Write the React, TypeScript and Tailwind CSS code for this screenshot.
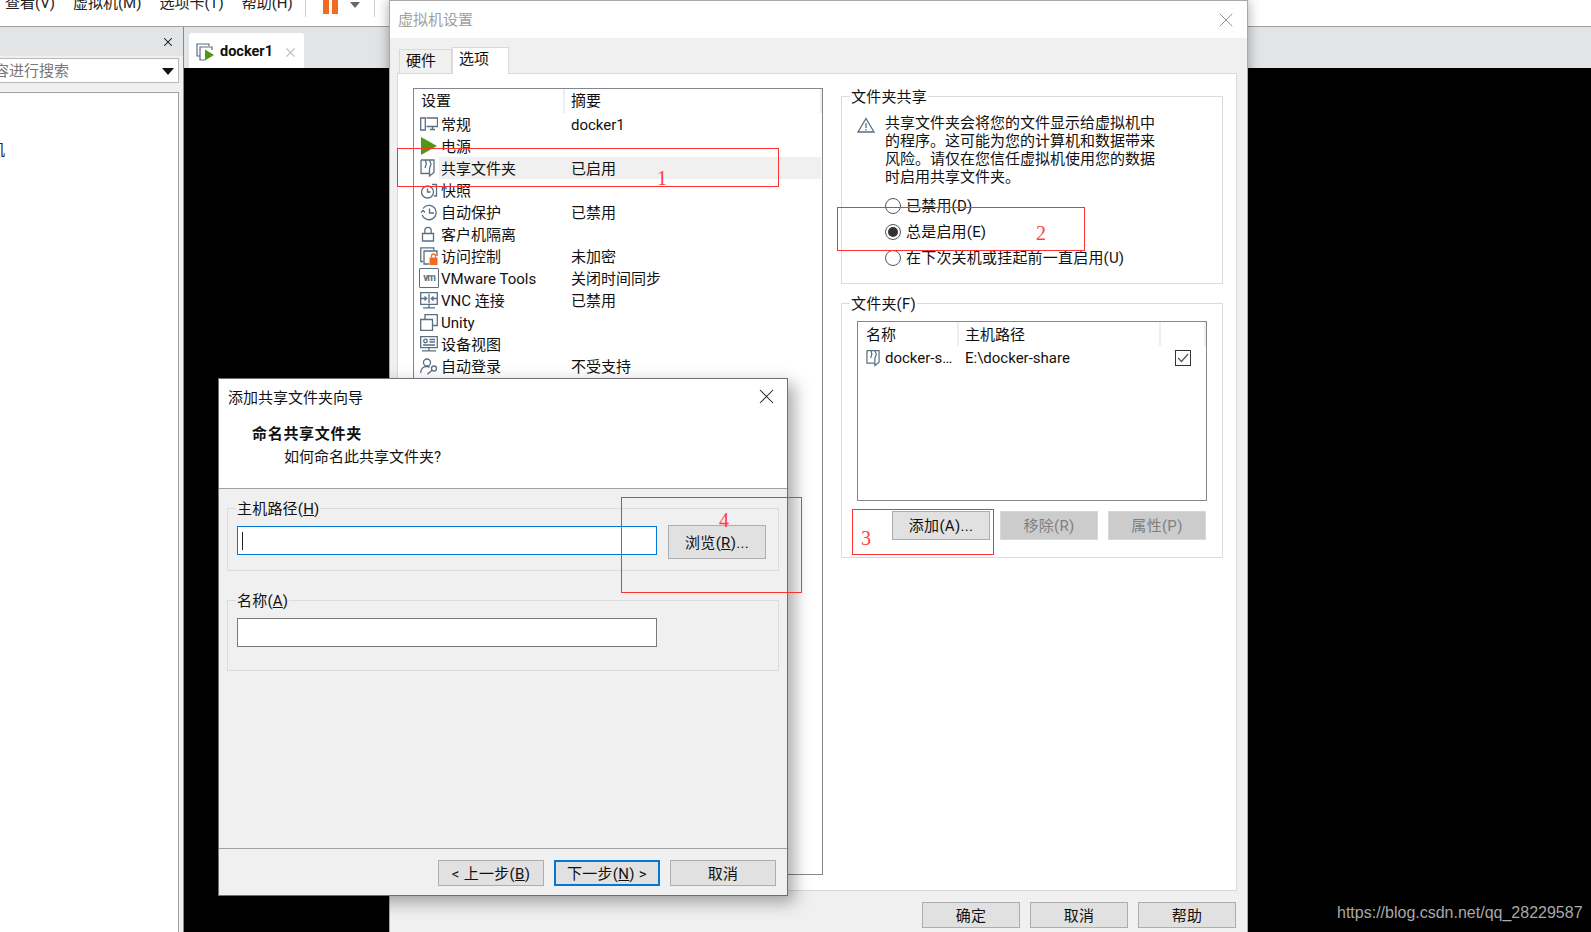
import type { ReactNode } from "react";
import { X } from "lucide-react";

const font = "font-['Roboto','Noto_Sans_CJK_SC',sans-serif]";

function Btn({ children, w, h, off, focus }: { children: ReactNode; w: string; h: string; off?: boolean; focus?: boolean }) {
  const look = off
    ? "bg-[#cccccc] border-[#d8d8d8] text-[#808080]"
    : focus
      ? "bg-[#e1e1e1] border-2 border-[#0078d7] text-[#111]"
      : "bg-[#e1e1e1] border-[#adadad] text-[#111]";
  return (
    <div className={`flex shrink-0 items-center justify-center border pt-[2px] text-[15px] leading-none tracking-[0.3px] ${w} ${h} ${look}`}>
      {children}
    </div>
  );
}

function Group({ legend, className, children }: { legend: ReactNode; className: string; children: ReactNode }) {
  return (
    <fieldset className={`border border-[#dcdcdc] ${className}`}>
      <legend className="ml-[8px] h-5 px-px pt-px text-[15px] leading-5 tracking-[0.2px] text-[#111]">{legend}</legend>
      {children}
    </fieldset>
  );
}

function Radio({ on, children }: { on?: boolean; children: ReactNode }) {
  return (
    <div className="flex h-[26px] items-center gap-[5px] pl-[43px] text-[15px] tracking-[0.2px] text-[#111]">
      <span className="flex h-4 w-4 items-center justify-center rounded-full border border-[#555] bg-white">
        {on && <span className="h-[10px] w-[10px] rounded-full bg-[#333]" />}
      </span>
      {children}
    </div>
  );
}

const S = { fill: "none", stroke: "#5b6f82", strokeWidth: 1.3 };

function ShareIcon({ w = 15 }: { w?: number }) {
  return (
    <svg width={w} height="18" viewBox="0 0 15 18" {...S} className="shrink-0">
      <path d="M1 1h13v12.500l-4.500 3.500V9.500L11 5 9.500 1M1 1v13.500h8.500M5.500 1l.8 4-1.300 4" />
    </svg>
  );
}

const rows: { name: string; sum?: string; icon: ReactNode; sel?: boolean }[] = [
  {
    name: "常规",
    sum: "docker1",
    icon: (
      <svg width="18" height="14" viewBox="0 0 18 14" {...S}>
        <path d="M.7 1h4.600v12H.7zM6.500 1h11v8.500h-11M10 12.500h5M12.500 9.500v3" />
      </svg>
    ),
  },
  {
    name: "电源",
    icon: (
      <svg width="17" height="18" viewBox="0 0 17 18">
        <path d="M1 0l16 9L1 18z" fill="#4e9a0e" />
      </svg>
    ),
  },
  { name: "共享文件夹", sum: "已启用", sel: true, icon: <ShareIcon /> },
  {
    name: "快照",
    icon: (
      <svg width="18" height="17" viewBox="0 0 18 17" {...S}>
        <circle cx="7.500" cy="10" r="6" />
        <path d="M7.500 6.500V10h3M12 2.500h4.500V14h-2.500" />
      </svg>
    ),
  },
  {
    name: "自动保护",
    sum: "已禁用",
    icon: (
      <svg width="18" height="17" viewBox="0 0 18 17" {...S}>
        <path d="M3 4.500A7.200 7.200 0 1 1 2.200 11M1 8.500l2 -2 2 2M9.500 4.500v4.500H14" />
      </svg>
    ),
  },
  {
    name: "客户机隔离",
    icon: (
      <svg width="16" height="16" viewBox="0 0 16 16" {...S}>
        <path d="M2.500 7.500h11v7.500h-11zM4.800 7.500V4.500a3.200 3.200 0 0 1 6.400 0v3" />
      </svg>
    ),
  },
  {
    name: "访问控制",
    sum: "未加密",
    icon: (
      <svg width="18" height="18" viewBox="0 0 18 18" {...S}>
        <path d="M3 14.500H.8V.8h13v2.200M9 17H4V4h13v5" />
        <path d="M9.500 10.500h8V18h-8z" fill="#f26b21" stroke="none" />
        <path d="M11.500 10.500V9a2 2 0 0 1 4 0v1.500" stroke="#f26b21" />
      </svg>
    ),
  },
  {
    name: "VMware Tools",
    sum: "关闭时间同步",
    icon: (
      <span className="-ml-px flex h-[20px] w-[20px] items-center justify-center rounded-[1px] border border-[#5b6f82] text-[10px] leading-none font-bold tracking-[-1px] text-[#5b6f82]">
        vm
      </span>
    ),
  },
  {
    name: "VNC 连接",
    sum: "已禁用",
    icon: (
      <svg width="18" height="17" viewBox="0 0 18 17" {...S}>
        <path d="M.7.700h16.600v11.600H.7zM3 15.800h12M9 12.300v3.500M.7 6.500h6M11.300 6.500h6M4.500 4.500l2.200 2-2.200 2M13.500 4.500l-2.200 2 2.200 2M9 2v9" />
      </svg>
    ),
  },
  {
    name: "Unity",
    icon: (
      <svg width="18" height="17" viewBox="0 0 18 17" {...S}>
        <path d="M.7 5.500h11.800v10.800H.7zM5 5.500V.7h12.300V11.500h-4.800" />
      </svg>
    ),
  },
  {
    name: "设备视图",
    icon: (
      <svg width="18" height="16" viewBox="0 0 18 16" {...S}>
        <path d="M.7.700h16.600v11H.7zM2 14.800h14M9 11.700v3" />
        <circle cx="5.500" cy="5" r="1.800" />
        <path d="M9.500 3.500h5.500M9.500 6h5.500M3 9h12" />
      </svg>
    ),
  },
  {
    name: "自动登录",
    sum: "不受支持",
    icon: (
      <svg width="18" height="17" viewBox="0 0 18 17" {...S}>
        <circle cx="7" cy="4.500" r="3.500" />
        <path d="M.7 15c0-4 2.500-6.500 6-6.500 1.300 0 2.300.3 3 .8" />
        <circle cx="14" cy="10.500" r="2.500" />
        <path d="M12 12.200L7.500 16.300" />
      </svg>
    ),
  },
];

function SettingsDialog() {
  return (
    <div className="absolute top-0 left-[389px] flex h-[932px] w-[859px] flex-col border-x border-t border-[#a8a8a8] border-b-0 bg-[#f0f0f0] shadow-[0_0_12px_rgba(0,0,0,0.35)]">
      <div className="flex h-[37px] shrink-0 items-center justify-between bg-white pr-[9px] pl-[8px] text-[15px] text-[#a0a0a0]">
        <span className="pt-[2px]">虚拟机设置</span>
        <X size={24} strokeWidth={0.9} className="text-[#888]" />
      </div>
      <div className="flex h-[35px] shrink-0 items-end pl-[9px] text-[15px] text-[#111]">
        <div className="flex h-[24px] w-[53px] items-center border border-b-0 border-[#d9d9d9] bg-[#f0f0f0] pl-[6px]">硬件</div>
        <div className="relative z-10 -mb-px flex h-[27px] w-[57px] items-start border border-b-0 border-[#d9d9d9] bg-white pl-[6px]">选项</div>
      </div>
      <div className="mr-[10px] ml-[7px] flex min-h-0 flex-1 items-start gap-[18px] border border-[#d9d9d9] bg-white pt-[12px] pl-[15px]">
        <div className="mt-[2px] h-[787px] w-[410px] shrink-0 border border-[#828790] text-[15px] text-[#111]">
          <div className="flex h-[24px] items-center">
            <div className="flex h-full w-[151px] items-center border-r-2 border-[#eeeeee] pl-[7px]">设置</div>
            <div className="flex h-full flex-1 items-center border-r-2 border-[#eeeeee] pl-[6px]">摘要</div>
          </div>
          {rows.map((r) => (
            <div key={r.name} className="flex h-[22px] items-center">
              <div className="flex w-[25px] shrink-0 items-center justify-start pl-[6px]">{r.icon}</div>
              <div className={`mr-px flex h-full flex-1 items-center pt-[2px] pl-[2px] ${r.sel ? "bg-[#f0f0f0]" : ""}`}>
                <div className="w-[130px] shrink-0 whitespace-nowrap">{r.name}</div>
                <div className="whitespace-nowrap">{r.sum}</div>
              </div>
            </div>
          ))}
        </div>
        <div className="flex w-[382px] shrink-0 flex-col gap-[9px]">
          <Group legend="文件夹共享" className="h-[198px]">
            <div className="flex gap-[10px] pt-[8px] pl-[15px]">
              <svg width="18" height="16" viewBox="0 0 18 16" className="mt-[3px] shrink-0">
                <path d="M9 1.500L17 15H1z" fill="none" stroke="#5b6f82" strokeWidth="1.300" />
                <path d="M9 6v5M9 12v1.500" stroke="#5b6f82" strokeWidth="1.300" />
              </svg>
              <p className="w-[272px] text-[15px] leading-[18px] text-[#111]">
                共享文件夹会将您的文件显示给虚拟机中的程序。这可能为您的计算机和数据带来风险。请仅在您信任虚拟机使用您的数据时启用共享文件夹。
              </p>
            </div>
            <div className="mt-[7px]">
              <Radio>已禁用(D)</Radio>
              <Radio on>总是启用(E)</Radio>
              <Radio>在下次关机或挂起前一直启用(U)</Radio>
            </div>
          </Group>
          <Group legend="文件夹(F)" className="h-[265px]">
            <div className="mt-[8px] ml-[15px] h-[180px] w-[350px] border border-[#828790] text-[15px] text-[#111]">
              <div className="flex h-[24px] items-center">
                <div className="flex h-full w-[101px] items-center border-r-2 border-[#eeeeee] pt-[2px] pl-[8px]">名称</div>
                <div className="flex h-full w-[202px] items-center border-r-2 border-[#eeeeee] pt-[2px] pl-[6px]">主机路径</div>
                <div className="h-full flex-1 border-r-2 border-[#eeeeee]" />
              </div>
              <div className="flex h-[24px] items-center">
                <div className="flex w-[101px] items-center gap-[5px] pl-[8px]">
                  <ShareIcon w={14} />
                  <span className="whitespace-nowrap pt-px">docker-s…</span>
                </div>
                <div className="w-[216px] pt-px pl-[6px]">E:\docker-share</div>
                <div className="flex h-4 w-4 items-center justify-center border border-[#333]">
                  <svg width="12" height="10" viewBox="0 0 12 10">
                    <path d="M1 5l3.500 3.500L11 1" fill="none" stroke="#555" strokeWidth="1.200" />
                  </svg>
                </div>
              </div>
            </div>
            <div className="mt-[10px] ml-[50px] flex gap-[10px]">
              <Btn w="w-[98px]" h="h-[29px]">添加(A)...</Btn>
              <Btn w="w-[98px]" h="h-[29px]" off>移除(R)</Btn>
              <Btn w="w-[98px]" h="h-[29px]" off>属性(P)</Btn>
            </div>
          </Group>
        </div>
      </div>
      <div className="flex h-[41px] shrink-0 items-start justify-end gap-[10px] pt-[11px] pr-[11px]">
        <Btn w="w-[98px]" h="h-[26px]">确定</Btn>
        <Btn w="w-[98px]" h="h-[26px]">取消</Btn>
        <Btn w="w-[98px]" h="h-[26px]">帮助</Btn>
      </div>
    </div>
  );
}

function WizardDialog() {
  return (
    <div className="absolute top-[378px] left-[218px] flex h-[518px] w-[570px] flex-col border border-[#707070] bg-[#f0f0f0] shadow-[6px_6px_16px_rgba(0,0,0,0.35)]">
      <div className="relative h-[110px] shrink-0 border-b border-[#a0a0a0] bg-white text-[15px] text-[#111]">
        <div className="flex h-[35px] items-center justify-between pr-[8px] pl-[9px]">
          <span className="pt-[4px]">添加共享文件夹向导</span>
          <X size={25} strokeWidth={1} className="text-[#222]" />
        </div>
        <div className="mt-[9px] pl-[33px] leading-[23px] font-bold tracking-[0.7px]">命名共享文件夹</div>
        <div className="pl-[65px] leading-[23px]">如何命名此共享文件夹?</div>
      </div>
      <div className="flex flex-1 flex-col gap-[19px] px-[8px] pt-[9px]">
        <Group legend={<>主机路径(<u>H</u>)</>} className="h-[73px]">
          <div className="flex items-start pl-[9px]">
            <div className="mt-[8px] flex h-[29px] w-[420px] items-center border border-[#0078d7] bg-white pl-[4px]">
              <span className="h-[18px] w-px bg-[#222]" />
            </div>
            <div className="mt-[7px] ml-[11px]">
              <Btn w="w-[98px]" h="h-[34px]">浏览(<u>R</u>)...</Btn>
            </div>
          </div>
        </Group>
        <Group legend={<>名称(<u>A</u>)</>} className="h-[81px]">
          <div className="mt-[8px] ml-[9px] h-[29px] w-[420px] border border-[#7a7a7a] bg-white" />
        </Group>
      </div>
      <div className="flex h-[47px] shrink-0 items-start justify-end gap-[10px] border-t border-[#a0a0a0] pt-[11px] pr-[11px]">
        <Btn w="w-[106px]" h="h-[26px]">{"< 上一步("}<u>B</u>)</Btn>
        <Btn w="w-[106px]" h="h-[26px]" focus>{"下一步("}<u>N</u>{") >"}</Btn>
        <Btn w="w-[106px]" h="h-[26px]">取消</Btn>
      </div>
    </div>
  );
}

export default function App() {
  return (
    <div className={`relative flex h-[932px] w-[1591px] flex-col overflow-hidden bg-black ${font}`}>
      <div className="flex h-[27px] shrink-0 items-start gap-[18px] border-b border-[#a0a0a0] bg-white pl-[5px] text-[15px] leading-[20px] text-[#222]">
        <span className="-mt-[7px]">查看(V)</span>
        <span className="-mt-[7px]">虚拟机(M)</span>
        <span className="-mt-[7px]">选项卡(T)</span>
        <span className="-mt-[7px]">帮助(H)</span>
        <div className="-ml-[6px] flex h-[17px] items-start border-x border-[#d0d0d0] pr-[14px] pl-[17px]">
          <span className="h-[14px] w-[6px] bg-[#f26b21]" />
          <span className="ml-[3px] h-[14px] w-[6px] bg-[#f26b21]" />
          <span className="mt-[2px] ml-[12px] h-0 w-0 border-x-[5px] border-t-[6px] border-x-transparent border-t-[#666]" />
        </div>
      </div>
      <div className="flex min-h-0 flex-1">
        <div className="flex w-[184px] shrink-0 flex-col border-r border-[#8a8a8a] bg-[#f0f0f0]">
          <div className="flex h-[29px] shrink-0 items-center justify-end bg-[#e3e4e6] pr-[8px]">
            <X size={14} strokeWidth={1.8} className="text-[#111]" />
          </div>
          <div className="mt-[2px] flex h-[25px] w-[179px] shrink-0 items-center justify-between overflow-hidden border border-l-0 border-[#b8b8b8] bg-white pt-px pr-[4px] text-[15px] text-[#777]">
            <span className="-ml-[6px] whitespace-nowrap">容进行搜索</span>
            <span className="h-0 w-0 border-x-[6px] border-t-[7px] border-x-transparent border-t-[#111]" />
          </div>
          <div className="mt-[9px] w-[179px] flex-1 overflow-hidden border-t border-r border-[#a0a0a0] bg-white">
            <div className="mt-[46px] -ml-[10px] text-[15px] text-[#222]">机</div>
          </div>
        </div>
        <div className="flex min-w-0 flex-1 flex-col">
          <div className="flex h-[41px] shrink-0 items-end bg-[#e3e4e6] pl-[5px]">
            <div className="flex h-[35px] w-[115px] items-center gap-[5px] rounded-t-[3px] bg-white pt-[3px] pl-[7px]">
              <svg width="19" height="18" viewBox="0 0 19 18" fill="none" stroke="#5b6f82" strokeWidth="1.200">
                <path d="M4 13H1V1h12v2M9 17H4V4h12v3" />
                <path d="M9 6.500L18 12l-9 5.500z" fill="#4e9a0e" stroke="none" />
              </svg>
              <span className="text-[14.500px] font-bold text-[#111]">docker1</span>
              <X size={15} strokeWidth={2} className="ml-[5px] text-[#c4c4c4]" />
            </div>
          </div>
          <div className="flex-1 bg-black" />
        </div>
      </div>

      <SettingsDialog />
      <WizardDialog />

      <div className="absolute top-[148px] left-[397px] h-[39px] w-[382px] border border-[#ff3030]" />
      <div className="absolute top-[207px] left-[837px] h-[44px] w-[248px] border border-[#ff3030]" />
      <div className="absolute top-[509px] left-[852px] h-[46px] w-[142px] border border-[#ff3030]" />
      <div className="absolute top-[497px] left-[621px] h-[96px] w-[181px] border border-[#ff3030]" />
      <span className="absolute top-[166px] left-[657px] font-['Liberation_Serif',serif] text-[20px] leading-6 text-[#ff4040]">1</span>
      <span className="absolute top-[221px] left-[1036px] font-['Liberation_Serif',serif] text-[20px] leading-6 text-[#ff4040]">2</span>
      <span className="absolute top-[526px] left-[861px] font-['Liberation_Serif',serif] text-[20px] leading-6 text-[#ff4040]">3</span>
      <span className="absolute top-[508px] left-[719px] font-['Liberation_Serif',serif] text-[20px] leading-6 text-[#ff4040]">4</span>
      <span className="absolute top-[903px] left-[1337px] font-['Liberation_Sans',sans-serif] text-[16px] leading-5 text-[#a8a8a8]">
        https://blog.csdn.net/qq_28229587
      </span>
    </div>
  );
}
